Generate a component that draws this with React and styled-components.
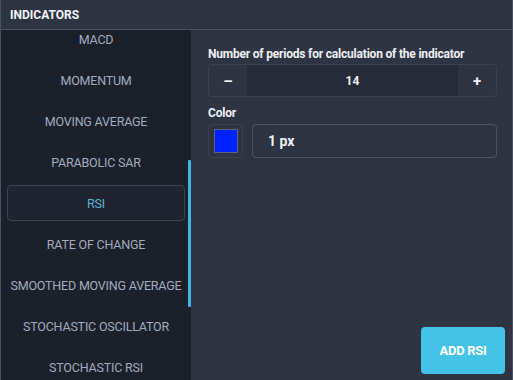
import React, { useEffect, useRef } from "react";
import styled, { createGlobalStyle } from "styled-components";

const GlobalStyle = createGlobalStyle`
  html, body {
    margin: 0;
    padding: 0;
    background: #2f3443;
    font-family: Roboto, "Liberation Sans", sans-serif;
  }
  * { box-sizing: border-box; }
`;

const Panel = styled.div`
  width: 513px;
  height: 380px;
  display: flex;
  flex-direction: column;
  background: #2f3443;
  border-left: 1px solid #4b5263;
  border-right: 1px solid #4b5263;
  overflow: hidden;
`;

const Header = styled.div`
  height: 30px;
  flex-shrink: 0;
  display: flex;
  align-items: center;
  padding-left: 9px;
  background: #2f3443;
  border-bottom: 1px solid #4b5263;
  color: #f2f4f8;
  font-size: 12px;
  font-weight: 700;
`;

const Body = styled.div`
  flex: 1;
  display: flex;
  min-height: 0;
`;

const Sidebar = styled.div`
  position: relative;
  width: 190px;
  flex-shrink: 0;
  background: #1c202b;
`;

const List = styled.div`
  height: 100%;
  overflow: hidden;
  padding: 0 6px;
`;

const Item = styled.div`
  height: 36px;
  margin-bottom: 5px;
  display: flex;
  align-items: center;
  justify-content: center;
  white-space: nowrap;
  font-size: 12.5px;
  letter-spacing: -0.2px;
  color: ${(p) => (p.$active ? "#5cb3d3" : "#a3abbd")};
  background: ${(p) => (p.$active ? "#1f2430" : "transparent")};
  border: 1px solid ${(p) => (p.$active ? "#3b4150" : "transparent")};
  border-radius: 4px;
`;

const Thumb = styled.div`
  position: absolute;
  right: 0;
  top: 130px;
  width: 3px;
  height: 147px;
  background: #3bb9e2;
  border-radius: 1px;
`;

const Content = styled.div`
  flex: 1;
  display: flex;
  flex-direction: column;
  padding: 17px 15px 6px 17px;
`;

const Label = styled.div`
  color: #eef0f4;
  font-size: 12px;
  font-weight: 700;
  letter-spacing: -0.2px;
  margin-bottom: ${(p) => p.$gap}px;
`;

const Stepper = styled.div`
  height: 33px;
  display: flex;
  border: 1px solid #3b4150;
  border-radius: 4px;
  overflow: hidden;
  margin-bottom: 9px;
`;

const StepButton = styled.button`
  width: 38px;
  border: none;
  background: #2f3443;
  color: #eef0f4;
  font-family: inherit;
  font-size: 15px;
  font-weight: 700;
  padding: 0;
`;

const StepValue = styled.div`
  flex: 1;
  display: flex;
  align-items: center;
  justify-content: center;
  background: #262b37;
  color: #eef0f4;
  font-size: 12px;
  font-weight: 700;
`;

const ColorRow = styled.div`
  display: flex;
  gap: 9px;
`;

const Swatch = styled.div`
  width: 35px;
  height: 34px;
  display: flex;
  align-items: center;
  justify-content: center;
  border: 1px solid #3b4150;
  border-radius: 4px;
`;

const SwatchFill = styled.div`
  width: 24px;
  height: 24px;
  background: ${(p) => p.$color};
  border: 1px solid #5a6480;
`;

const Input = styled.div`
  flex: 1;
  height: 34px;
  display: flex;
  align-items: center;
  padding-left: 15px;
  border: 1px solid #4b5263;
  border-radius: 4px;
  color: #eef0f4;
  font-size: 14px;
  font-weight: 700;
`;

const Footer = styled.div`
  margin-top: auto;
  display: flex;
  justify-content: flex-end;
`;

const AddButton = styled.button`
  width: 84px;
  height: 47px;
  border: none;
  border-radius: 4px;
  background: #45c3e7;
  color: #ffffff;
  font-family: inherit;
  font-size: 13px;
  font-weight: 700;
  letter-spacing: -0.3px;
  margin-right: -8px;
`;

const indicators = [
  "MACD",
  "MOMENTUM",
  "MOVING AVERAGE",
  "PARABOLIC SAR",
  "RSI",
  "RATE OF CHANGE",
  "SMOOTHED MOVING AVERAGE",
  "STOCHASTIC OSCILLATOR",
  "STOCHASTIC RSI",
  "WILLIAMS %R",
];

const App = () => {
  const listRef = useRef(null);

  useEffect(() => {
    if (listRef.current) listRef.current.scrollTop = 9;
  }, []);

  return (
    <>
      <GlobalStyle />
      <Panel>
        <Header>INDICATORS</Header>
        <Body>
          <Sidebar>
            <List ref={listRef}>
              {indicators.map((name) => (
                <Item key={name} $active={name === "RSI"}>
                  {name}
                </Item>
              ))}
            </List>
            <Thumb />
          </Sidebar>
          <Content>
            <Label $gap={3}>Number of periods for calculation of the indicator</Label>
            <Stepper>
              <StepButton>–</StepButton>
              <StepValue>14</StepValue>
              <StepButton>+</StepButton>
            </Stepper>
            <Label $gap={4}>Color</Label>
            <ColorRow>
              <Swatch>
                <SwatchFill $color="#0022ff" />
              </Swatch>
              <Input>1 px</Input>
            </ColorRow>
            <Footer>
              <AddButton>ADD RSI</AddButton>
            </Footer>
          </Content>
        </Body>
      </Panel>
    </>
  );
};

export default App;
